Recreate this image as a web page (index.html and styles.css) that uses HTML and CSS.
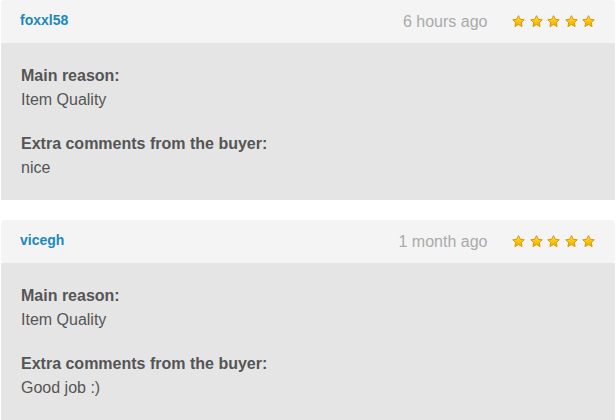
FILE: index.html
```html
<!DOCTYPE html>
<html lang="en">
<head>
<meta charset="utf-8">
<title>Reviews</title>
<link rel="stylesheet" href="styles.css">
</head>
<body>
<svg width="0" height="0" class="defs" aria-hidden="true">
  <defs>
    <linearGradient id="sg" x1="0" y1="0" x2="0" y2="1">
      <stop offset="0" stop-color="#ffe45c"/>
      <stop offset="0.55" stop-color="#ffc400"/>
      <stop offset="1" stop-color="#f4a800"/>
    </linearGradient>
    <symbol id="star" viewBox="0 0 14 14">
      <path d="M7 0.7 L8.9 4.6 L13.2 5.15 L10 8.1 L10.85 12.5 L7 10.3 L3.15 12.5 L4 8.1 L0.8 5.15 L5.1 4.6 Z" fill="url(#sg)" stroke="#d69200" stroke-width="1" stroke-linejoin="round"/>
    </symbol>
  </defs>
</svg>
<div class="reviews">
  <article class="review">
    <header class="review-head">
      <a class="user" href="#">foxxl58</a>
      <span class="time">6 hours ago</span>
      <span class="stars">
        <svg class="star"><use href="#star"/></svg>
        <svg class="star"><use href="#star"/></svg>
        <svg class="star"><use href="#star"/></svg>
        <svg class="star"><use href="#star"/></svg>
        <svg class="star"><use href="#star"/></svg>
      </span>
    </header>
    <div class="review-body">
      <p><strong>Main reason:</strong><br>Item Quality</p>
      <p><strong>Extra comments from the buyer:</strong><br>nice</p>
    </div>
  </article>
  <article class="review">
    <header class="review-head">
      <a class="user" href="#">vicegh</a>
      <span class="time">1 month ago</span>
      <span class="stars">
        <svg class="star"><use href="#star"/></svg>
        <svg class="star"><use href="#star"/></svg>
        <svg class="star"><use href="#star"/></svg>
        <svg class="star"><use href="#star"/></svg>
        <svg class="star"><use href="#star"/></svg>
      </span>
    </header>
    <div class="review-body">
      <p><strong>Main reason:</strong><br>Item Quality</p>
      <p><strong>Extra comments from the buyer:</strong><br>Good job :)</p>
    </div>
  </article>
</div>
</body>
</html>
```
FILE: styles.css
```css
html, body {
  margin: 0;
  padding: 0;
  background: #ffffff;
}
body {
  font-family: "Liberation Sans", Arial, sans-serif;
  color: #555555;
}
.defs {
  position: absolute;
  width: 0;
  height: 0;
  overflow: hidden;
}
.reviews {
  display: flex;
  flex-direction: column;
  gap: 20px;
  padding: 0 1px;
}
.review {
  display: flex;
  flex-direction: column;
}
.review-head {
  display: flex;
  align-items: center;
  height: 43px;
  padding: 0 20px 0 19px;
  background: #f4f4f4;
  border-radius: 4px;
}
.user {
  font-size: 14px;
  font-weight: bold;
  color: #1b88bf;
  text-decoration: none;
  padding-bottom: 3px;
}
.time {
  margin-left: auto;
  margin-right: 25px;
  font-size: 16px;
  color: #aaaaaa;
}
.stars {
  display: flex;
  gap: 4.4px;
  padding-bottom: 1px;
}
.star {
  width: 13px;
  height: 13px;
  display: block;
}
.review-body {
  background: #e5e5e5;
  padding: 21px 20px 20px 20px;
  display: flex;
  flex-direction: column;
  gap: 20px;
}
.review-body p {
  margin: 0;
  font-size: 16px;
  line-height: 24px;
  color: #555555;
}
.review-body strong {
  font-weight: bold;
}
```
